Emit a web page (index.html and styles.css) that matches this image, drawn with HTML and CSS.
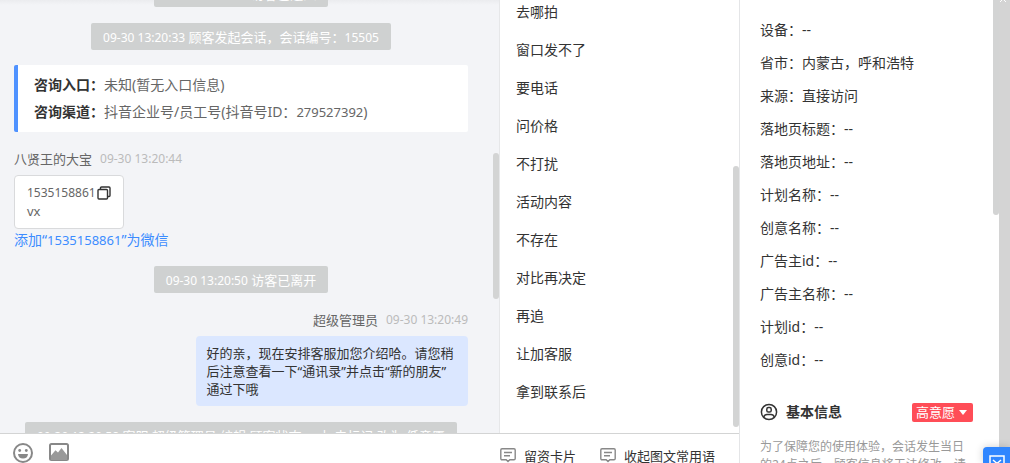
FILE: index.html
```html
<!DOCTYPE html>
<html lang="zh-CN">
  <head>
    <title>在线客服</title>
    <meta charset="UTF-8"/>
    <link rel="stylesheet" href="styles.css">
  </head>
  <body>
    <main class="desk">
      <div class="panes">
        <section class="chat">
          <div class="messages">
            <p class="notice first"><time>09-30 13:20:33</time> 访客已进入</p>
            <p class="notice"><time>09-30 13:20:33</time> 顾客发起会话，会话编号：<span class="num">15505</span></p>
            <div class="source">
              <p><b>咨询入口：</b>未知(暂无入口信息)</p>
              <p><b>咨询渠道：</b>抖音企业号/员工号(抖音号ID：<span class="num">279527392</span>)</p>
            </div>
            <div class="message">
              <p class="sender">八贤王的大宝 <time>09-30 13:20:44</time></p>
              <div class="bubble">
                <div class="account">
                  <span class="num">1535158861</span>
                  <button class="copy" aria-label="复制">
                    <svg width="14" height="14" viewBox="0 0 14 14" fill="none" stroke="#333" stroke-width="1.4">
                      <rect x="1" y="3.5" width="9.5" height="9.5" rx="1"/>
                      <path d="M3.5 3.5V2Q3.5 1 4.5 1H12Q13 1 13 2V9.5Q13 10.5 12 10.5H10.5"/>
                    </svg>
                  </button>
                </div>
                <div>vx</div>
              </div>
              <a class="add" href="#">添加“<span class="num">1535158861</span>”为微信</a>
            </div>
            <p class="notice"><time>09-30 13:20:50</time> 访客已离开</p>
            <div class="message mine">
              <p class="sender">超级管理员 <time>09-30 13:20:49</time></p>
              <div class="bubble">好的亲，现在安排客服加您介绍哈。请您稍后注意查看一下“通讯录”并点击“新的朋友”通过下哦</div>
            </div>
            <p class="notice"><time>09-30 13:20:58</time> 客服 超级管理员 编辑 顾客状态 ，由 未标记 改为 低意愿</p>
          </div>
          <div class="thumb"></div>
        </section>
        <section class="phrases">
          <ul>
            <li>去哪拍</li>
            <li>窗口发不了</li>
            <li>要电话</li>
            <li>问价格</li>
            <li>不打扰</li>
            <li>活动内容</li>
            <li>不存在</li>
            <li>对比再决定</li>
            <li>再追</li>
            <li>让加客服</li>
            <li>拿到联系后</li>
          </ul>
          <div class="thumb"></div>
        </section>
      </div>
      <div class="toolbar">
        <div class="tools">
          <button aria-label="表情">
            <svg width="20" height="20" viewBox="0 0 20 20">
              <circle cx="10" cy="10" r="9" fill="none" stroke="#888" stroke-width="2"/>
              <circle cx="6.7" cy="7.5" r="1.4" fill="#888"/>
              <circle cx="13.3" cy="7.5" r="1.4" fill="#888"/>
              <path d="M5 11H15Q14.5 15.6 10 15.6T5 11Z" fill="#888"/>
            </svg>
          </button>
          <button aria-label="图片">
            <svg width="20" height="20" viewBox="0 0 20 20">
              <rect x="1" y="1" width="18" height="16" rx="1.5" fill="none" stroke="#888" stroke-width="2"/>
              <path d="M2 12.5L6.5 7.2L9 9.5L12.5 5L18 12V17H2Z" fill="#999"/>
            </svg>
          </button>
        </div>
        <div class="actions">
          <button>
            <svg width="16" height="16" viewBox="0 0 16 16" fill="none" stroke="#888" stroke-width="1.4">
              <path d="M2 1.7H14Q15.2 1.7 15.2 3V11.5Q15.2 12.7 14 12.7H9.8L8 14.5L6.2 12.7H2Q.8 12.7 .8 11.5V3Q.8 1.7 2 1.7ZM4 5.5H12M4 8.8H10"/>
            </svg>
            留资卡片
          </button>
          <button>
            <svg width="16" height="16" viewBox="0 0 16 16" fill="none" stroke="#888" stroke-width="1.4">
              <path d="M2 1.7H14Q15.2 1.7 15.2 3V11.5Q15.2 12.7 14 12.7H9.8L8 14.5L6.2 12.7H2Q.8 12.7 .8 11.5V3Q.8 1.7 2 1.7ZM4 5.5H12M4 8.8H10"/>
            </svg>
            收起图文常用语
          </button>
        </div>
      </div>
    </main>
    <aside class="visitor">
      <div class="details">
        <ul>
          <li>设备：--</li>
          <li>省市：内蒙古，呼和浩特</li>
          <li>来源：直接访问</li>
          <li>落地页标题：--</li>
          <li>落地页地址：--</li>
          <li>计划名称：--</li>
          <li>创意名称：--</li>
          <li>广告主id：--</li>
          <li>广告主名称：--</li>
          <li>计划id：--</li>
          <li>创意id：--</li>
        </ul>
        <div class="basic">
          <svg width="18" height="18" viewBox="0 0 18 18" fill="none" stroke="#333" stroke-width="1.5">
            <circle cx="9" cy="9" r="7.6"/>
            <rect x="6.8" y="4.6" width="4.4" height="4.4" rx="1.6"/>
            <path d="M3.7 14Q4.5 11.5 7 11.5H11Q13.5 11.5 14.3 14"/>
          </svg>
          <h2>基本信息</h2>
          <div class="intent">
            <select aria-label="顾客状态">
              <option>高意愿</option>
              <option>低意愿</option>
              <option>未标记</option>
            </select>
            <svg width="8" height="5" viewBox="0 0 8 5"><path d="M0 0H8L4 5Z" fill="#fff"/></svg>
          </div>
        </div>
        <p class="hint">为了保障您的使用体验，会话发生当日的24点之后，顾客信息将无法修改，请</p>
        <div class="thumb"></div>
      </div>
      <div class="gutter">
        <svg width="6" height="2" viewBox="0 0 6 2"><path d="M0 2L2 0M6 2L4 0" stroke="#fff"/></svg>
      </div>
      <button class="service" aria-label="客服消息">
        <svg width="16" height="16" viewBox="0 0 16 16" fill="none" stroke="#fff" stroke-width="1.5">
          <path d="M1 1H15V13H10L8 15L6 13H1ZM4 5L8 8.5L12 5"/>
        </svg>
      </button>
    </aside>
  </body>
</html>
```
FILE: styles.css
```css
* {
  box-sizing: border-box;
}
body {
  display: flex;
  height: 100vh;
  margin: 0;
  overflow: hidden;
  background: white;
  font-family: 'Noto Sans', 'Noto Sans CJK SC', sans-serif;
  font-size: 14px;
  color: #333;
}
p, ul, h2 {
  margin: 0;
  padding: 0;
}
ul {
  list-style: none;
}
button {
  display: flex;
  align-items: center;
  padding: 0;
  border: none;
  background: none;
  color: inherit;
  font: inherit;
  cursor: pointer;
}
svg {
  display: block;
  flex: none;
}
.thumb {
  position: absolute;
  right: 0;
  width: 6px;
  border-radius: 3px;
  background: #d3d4d4;
}

/* left side */
.desk {
  display: flex;
  flex-direction: column;
  flex: 1;
  min-width: 0;
  border-right: 1px solid #e4e5e7;
}
.panes {
  display: flex;
  flex: 1;
  min-height: 0;
}
.chat {
  position: relative;
  flex: 1;
  overflow: hidden;
  border-right: 1px solid #e6e7e9;
  background: linear-gradient(#ebecef, #f3f4f7 5px);
  font-size: 13px;
  line-height: 18px;
}
.chat .thumb {
  top: 153px;
  height: 146px;
}
.messages {
  display: flex;
  flex-direction: column;
  align-items: flex-start;
  padding: 0 31px 0 14px;
}
.num, time {
  font-size: 12px;
}
.notice {
  align-self: center;
  height: 27px;
  margin-top: 16px;
  padding: 0 12px;
  border-radius: 2px;
  background: #cfd1d1;
  color: white;
  line-height: 28px;
  white-space: nowrap;
}
/* scrolled under the top edge */
.notice.first {
  margin-top: -20px;
}
.source {
  align-self: stretch;
  margin-top: 15px;
  padding: 6px 16px;
  border-left: 4px solid #4f92ff;
  border-radius: 2px;
  background: white;
  color: #666;
  font-size: 14px;
  line-height: 27px;
}
.source b {
  color: #333;
}
.source .num {
  font-size: 13px;
}
.message {
  display: flex;
  flex-direction: column;
  align-items: flex-start;
  align-self: stretch;
  margin-top: 18px;
}
.mine {
  align-items: flex-end;
}
.sender {
  display: flex;
  gap: 8px;
  color: #666;
}
.sender time {
  color: #bbb;
}
.bubble {
  max-width: 60%;
  margin-top: 7px;
  padding: 8px 12px;
  border: 1px solid #d9dadc;
  border-radius: 4px;
  background: white;
  color: #666;
}
.mine .bubble {
  padding: 8px 11px;
  border: none;
  background: #dbe7ff;
  color: #333;
}
.account {
  display: flex;
  align-items: center;
}
.account .num {
  min-width: 70px;
}
.add {
  margin-top: 1px;
  color: #3c8cff;
  font-size: 14px;
  line-height: 19px;
  text-decoration: none;
}
.add .num {
  font-size: 13px;
}
.phrases {
  position: relative;
  flex: none;
  width: 239px;
  overflow: hidden;
}
.phrases ul {
  margin-top: -7px;
}
.phrases li {
  padding-left: 16px;
  line-height: 38px;
}
.phrases .thumb {
  top: 166px;
  height: 261px;
}
.toolbar {
  display: flex;
  justify-content: space-between;
  height: 30px;
  padding: 0 24px 0 13px;
  border-top: 1px solid #d3d4d4;
  font-size: 13px;
}
.tools, .actions {
  display: flex;
  align-items: center;
}
.tools {
  gap: 16px;
  padding-top: 8px;
}
.actions {
  gap: 24px;
  padding-top: 13px;
}
.actions button {
  gap: 8px;
}

/* right side */
.visitor {
  position: relative;
  display: flex;
  flex: none;
  width: 270px;
}
.details {
  position: relative;
  flex: 1;
  padding: 13px 26px 0 20px;
}
.details li {
  line-height: 33px;
}
.details .thumb {
  top: -3px;
  height: 218px;
}
.basic {
  display: flex;
  align-items: center;
  margin-top: 26px;
}
.basic h2 {
  margin-left: 8px;
  font-size: 14px;
  line-height: 20px;
}
.intent {
  position: relative;
  margin-left: auto;
}
.intent select {
  display: block;
  height: 19px;
  padding: 0 17px 0 4px;
  border: none;
  border-radius: 2px;
  background: #ff4d57;
  color: white;
  font-family: inherit;
  font-size: 13px;
  line-height: 19px;
  appearance: none;
}
.intent svg {
  position: absolute;
  top: 7px;
  right: 6px;
  pointer-events: none;
}
.hint {
  margin-top: 16px;
  color: #999;
  font-size: 12px;
  line-height: 18px;
}
.gutter {
  width: 11px;
  padding-left: 1px;
  background: #d4d4d4;
}
.service {
  position: absolute;
  right: 0;
  bottom: 0;
  justify-content: center;
  align-items: flex-end;
  width: 27px;
  height: 16px;
  border-radius: 4px 0 0 0;
  background: #2f86ff;
  box-shadow: 0 0 8px rgba(0,0,0,0.2);
  overflow: hidden;
}
.service svg {
  margin-bottom: -8px;
}
```
